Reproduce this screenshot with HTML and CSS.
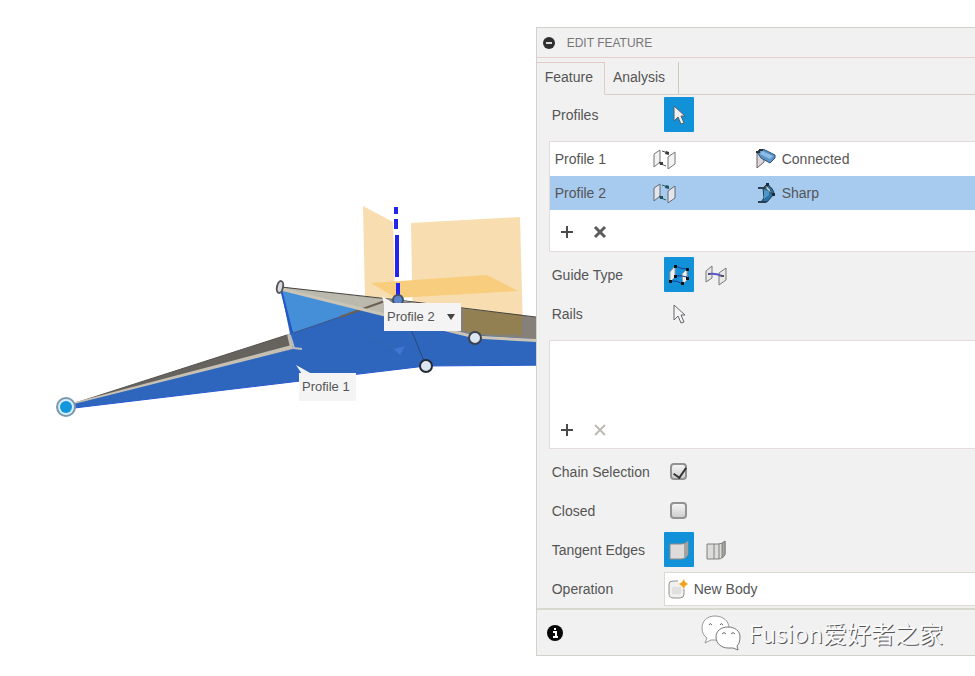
FILE: index.html
```
<!DOCTYPE html>
<html lang="en">

<head>
    <meta charset="UTF-8">
    <title>Edit Feature</title>
    <link rel="stylesheet" href="styles.css">
</head>

<body>
    <div class="app">
        <!-- model view -->
        <main class="workspace">
            <svg class="model" width="560" height="676" viewBox="0 0 560 676" aria-hidden="true">
                <!-- origin planes -->
                <polygon points="363,206 393,222 395,300 365,298" fill="#f8ddb0" />
                <polygon points="411,223 520,217 523,333 413,330" fill="#f8ddb0" />
                <polygon points="371,283 487,275 518,291 396,298" fill="#f8cd7d" />
                <path d="M396 207v7M396 219v10M397 235v42M398 283v13" stroke="#2424f0" stroke-width="4" />
                <!-- left wing -->
                <polygon points="66,406 290,334 294,349" fill="#66625d" />
                <path d="M66 406L290 334" stroke="#55524e" stroke-width="1" />
                <path d="M72 405L292 347L289 334" fill="none" stroke="#c4c0b3" stroke-width="4" />
                <!-- right wing -->
                <polygon points="281,287 383,299 560,320 560,342 475,336 360,311" fill="#85817a" />
                <polygon points="281,287 390,300 385,318" fill="#bbb8ae" />
                <polygon points="463,309 522,315 522,335 475,334 463,330" fill="#928052" />
                <path d="M281 287L398 300L560 320" fill="none" stroke="#46443f" stroke-width="1" />
                <!-- body -->
                <polygon points="281,290 385,316 475,335 560,341 560,365 426,366 66,409 70,405 293,349 290,334" fill="#2e66bd" />
                <polygon points="281,290 362,309 293,333" fill="#458fd8" />
                <path d="M293 333L340 317" stroke="#3f5787" stroke-width="1" />
                <path d="M340 317L385 301" stroke="#6d5f50" stroke-width="2" />
                <path d="M281 289L385 315L475 337L560 342" fill="none" stroke="#cbc5b8" stroke-width="3" />
                <path d="M281 289L292 333" fill="none" stroke="#2456c6" stroke-width="2" />
                <path d="M290 335L294 348L302 349" fill="none" stroke="#b9bbbf" stroke-width="2" />
                <path d="M66 409L426 366L560 365" fill="none" stroke="#2759d0" stroke-width="1" />
                <path d="M408 322L426 366" stroke="#294875" stroke-width="1" />
                <path d="M360 331L398 350" stroke="#2d6fae" stroke-width="1" />
                <path d="M394 349l11-3l-5 9z" fill="#4274d5" />
                <!-- control points -->
                <ellipse cx="280" cy="287" rx="3" ry="6" transform="rotate(12 280 287)" fill="#d9dce2" stroke="#57575a" stroke-width="2" />
                <circle cx="398" cy="300" r="5" fill="#5b85c8" stroke="#3d5271" stroke-width="2" />
                <circle cx="475" cy="338" r="6" fill="#dce5f0" stroke="#3b424d" stroke-width="2" />
                <circle cx="426" cy="366" r="6" fill="#dce5f0" stroke="#262b35" stroke-width="2" />
                <circle cx="66" cy="407" r="9" fill="#d3efff" stroke="#7d98ad" stroke-width="2" />
                <circle cx="66" cy="407" r="6" fill="#1496dc" />
                <path d="M296 365l16 9h-10z" fill="#f4f4f4" />
                <path d="M382 296l14 9h-12z" fill="#f4f4f4" />
            </svg>
            <button class="tag tag-profile-2" type="button">Profile 2
                <svg width="8" height="6" viewBox="0 0 8 6" aria-hidden="true"><path d="M0 0h8L4 6z" fill="#444" /></svg>
            </button>
            <span class="tag tag-profile-1">Profile 1</span>
        </main>

        <!-- dialog -->
        <aside class="panel">
            <header class="panel-header">
                <button class="plain-button" type="button" aria-label="Collapse">
                    <svg width="12" height="12" viewBox="0 0 12 12"><circle cx="6" cy="6" r="6" fill="#303030" /><path d="M3 6h6" stroke="#ddd" stroke-width="2" /></svg>
                </button>
                <h1 class="panel-title">EDIT FEATURE</h1>
            </header>

            <div class="tabs" role="tablist">
                <button class="tab tab-active" type="button" role="tab" aria-selected="true">Feature</button>
                <button class="tab" type="button" role="tab" aria-selected="false">Analysis</button>
            </div>

            <form class="panel-body">
                <div class="field">
                    <span class="field-label" id="profiles-label">Profiles</span>
                    <button class="tool tool-active" type="button" aria-labelledby="profiles-label">
                        <svg width="14" height="20" viewBox="0 0 14 20"><path d="M2 1v15l4-4 3 7 3-1-3-7h4z" fill="#eee" stroke="#50606b" stroke-width="1" /></svg>
                    </button>
                </div>

                <div class="list">
                    <table class="profiles">
                        <tr>
                            <td class="profile-name">Profile 1</td>
                            <td class="profile-shape">
                                <svg width="24" height="20" viewBox="0 0 24 20"><g fill="#f3f3f3" stroke="#77777a" stroke-width="1"><path d="M1 5l6-4v12l-6 5zM15 8l7-5v12l-7 5z" /></g><path d="M9 2l6 2M8 15l5 2" stroke="#555" stroke-width="1" /><path d="M13 2l3 1v3l-4-1zM6 13h4v3H7z" fill="#3a3a3a" /></svg>
                            </td>
                            <td class="profile-type">
                                <span class="type">
                                    <svg width="20" height="20" viewBox="0 0 20 20"><path d="M1 4v15l7-6V6z" fill="#ddd5d8" stroke="#6a5f66" stroke-width="1" /><path d="M1 3l3-3h3l12 6v3l-5 5-9-5z" fill="#5b93cb" stroke="#2e526f" stroke-width="1" /><path d="M6 2l11 5-3 3-10-5z" fill="#8dbce4" /><path d="M0 2h4v2H0zM3 0h4v2H3z" fill="#333" /></svg>
                                    Connected
                                </span>
                            </td>
                        </tr>
                        <tr class="selected">
                            <td class="profile-name">Profile 2</td>
                            <td class="profile-shape">
                                <svg width="24" height="20" viewBox="0 0 24 20"><g fill="#e4e6ec" stroke="#626873" stroke-width="1"><path d="M1 5l6-4v12l-6 5zM15 8l7-5v12l-7 5z" /></g><path d="M9 2l6 2M8 15l5 2" stroke="#235f67" stroke-width="1" /><path d="M13 2l3 1v3l-4-1zM6 13h4v3H7z" fill="#205158" /></svg>
                            </td>
                            <td class="profile-type">
                                <span class="type">
                                    <svg width="20" height="20" viewBox="0 0 20 20"><path d="M7 5l4-4q7 5 7 10l-7 8H5l3-4z" fill="#2a6fa6" stroke="#203d50" stroke-width="1" /><path d="M10 2q5 4 6 9l-6-5z" fill="#c3d3e2" stroke="#354a58" stroke-width="1" /><path d="M8 7v9l5-4V8z" fill="#4f97cb" /><path d="M2 5h7M2 19h8" stroke="#2b3f4d" stroke-width="2" /><path d="M10 0h3v3h-3zM16 10h3v3h-3z" fill="#1d2c36" /></svg>
                                    Sharp
                                </span>
                            </td>
                        </tr>
                    </table>
                    <div class="list-actions list-actions-profiles">
                        <button class="plain-button" type="button" aria-label="Add profile">
                            <svg width="14" height="14" viewBox="0 0 14 14"><path d="M7 1v12M1 7h12" stroke="#4a4a4a" stroke-width="2" /></svg>
                        </button>
                        <button class="plain-button" type="button" aria-label="Remove profile">
                            <svg width="14" height="14" viewBox="0 0 14 14"><path d="M2 2l10 10M12 2L2 12" stroke="#5c5c5c" stroke-width="3" /></svg>
                        </button>
                    </div>
                </div>

                <div class="field">
                    <span class="field-label">Guide Type</span>
                    <button class="tool tool-active" type="button" aria-label="Rails guide">
                        <svg width="22" height="22" viewBox="0 0 22 22"><path d="M2 8l5-6v11l-5 5zM14 10l5-5v11l-4 4z" fill="#f0f0f0" stroke="#9a9a9c" stroke-width="1" /><path d="M7 2q6 3 12 3M2 17q7-1 13 3M7 12q6-1 12 1" fill="none" stroke="#173a9c" stroke-width="1" /><path d="M6 1h3v3H6zM18 4h3v3h-3zM1 16h3v3H1zM13 18h3v3h-3zM6 11h3v3H6zM18 13h3v3h-3z" fill="#111" /></svg>
                    </button>
                    <button class="tool" type="button" aria-label="Centerline guide">
                        <svg width="22" height="22" viewBox="0 0 22 22"><path d="M1 7l6-5v12l-6 4zM14 9l7-5v12l-7 5z" fill="#e8e8e6" stroke="#77777a" stroke-width="1" /><path d="M4 10q6-1 13 2" fill="none" stroke="#5a5ac4" stroke-width="2" /><path d="M3 9h2v2H3zM16 11h3v2h-3z" fill="#555" /></svg>
                    </button>
                </div>
                <div class="field">
                    <span class="field-label" id="rails-label">Rails</span>
                    <button class="tool" type="button" aria-labelledby="rails-label">
                        <svg width="14" height="20" viewBox="0 0 14 20"><path d="M2 1v15l4-4 3 7 3-1-3-7h4z" fill="#f5f5f5" stroke="#66666a" stroke-width="1" /></svg>
                    </button>
                </div>

                <div class="list">
                    <div class="rails-empty"></div>
                    <div class="list-actions">
                        <button class="plain-button" type="button" aria-label="Add rail">
                            <svg width="14" height="14" viewBox="0 0 14 14"><path d="M7 1v12M1 7h12" stroke="#4a4a4a" stroke-width="2" /></svg>
                        </button>
                        <button class="plain-button" type="button" aria-label="Remove rail" disabled>
                            <svg width="14" height="14" viewBox="0 0 14 14"><path d="M2 2l10 10M12 2L2 12" stroke="#bdbbb4" stroke-width="2" /></svg>
                        </button>
                    </div>
                </div>

                <div class="field">
                    <label class="field-label" for="chain">Chain Selection</label>
                    <input class="check" type="checkbox" id="chain" checked>
                </div>
                <div class="field">
                    <label class="field-label" for="closed">Closed</label>
                    <input class="check" type="checkbox" id="closed">
                </div>
                <div class="field">
                    <span class="field-label">Tangent Edges</span>
                    <button class="tool tool-active" type="button" aria-label="Merge">
                        <svg width="22" height="22" viewBox="0 0 22 22"><path d="M2 5h11q5 0 7-3v13q-2 5-7 5H2z" fill="#dddcda" stroke="#8f8a84" stroke-width="1" /><path d="M16 5q3-1 4-3v13q-1 3-4 4z" fill="#a5a29f" /></svg>
                    </button>
                    <button class="tool" type="button" aria-label="Keep">
                        <svg width="22" height="22" viewBox="0 0 22 22"><path d="M2 5h11q5 0 7-3v13q-2 5-7 5H2z" fill="#dcdcda" stroke="#80807d" stroke-width="1" /><path d="M9 5v15M14 5v15" stroke="#80807d" stroke-width="1" /><path d="M17 4q2-1 3-2v13q-1 3-3 4z" fill="#a5a5a2" stroke="#80807d" stroke-width="1" /></svg>
                    </button>
                </div>
                <div class="field">
                    <label class="field-label" for="operation">Operation</label>
                    <div class="combo">
                        <svg width="20" height="20" viewBox="0 0 20 20" aria-hidden="true"><path d="M10 2H5Q1 2 1 5v10q0 4 5 4h6q4 0 4-4v-5" fill="#f0f0ee" stroke="#92928f" stroke-width="1" /><path d="M4 8h9v7H4z" fill="#e0e0de" /><path d="M16 0l1 3 3 2-3 2-1 3-2-3-3-2 3-2z" fill="#f5a21b" /></svg>
                        <select class="combo-select" id="operation">
                            <option>New Body</option>
                        </select>
                    </div>
                </div>
            </form>

            <footer class="panel-footer">
                <button class="plain-button" type="button" aria-label="Info">
                    <svg width="16" height="16" viewBox="0 0 16 16"><circle cx="8" cy="8" r="8" fill="#050505" /><path d="M8 3v2M6 7h3v5M6 12h5" fill="none" stroke="#fff" stroke-width="2" /></svg>
                </button>
                <div class="account">
                    <svg width="40" height="36" viewBox="0 0 40 36" aria-hidden="true">
                        <path d="M14 1C6 1 1 6 1 13c0 5 2 8 5 10l-2 5 6-3h6c7 0 12-5 12-12S22 1 14 1z" fill="#fff" stroke="#999" stroke-width="1" />
                        <path d="M27 12c-7 0-12 4-12 10s5 11 12 11h5l5 2-1-4c2-2 3-5 3-9 0-6-5-10-12-10z" fill="#fff" stroke="#777" stroke-width="1" />
                        <path d="M8 10q1-3 3 0M19 10q1-3 3 0M21 19q2-3 4 0M30 19q2-3 4 0" fill="none" stroke="#666" stroke-width="1" />
                    </svg>
                    <span>Fusion爱好者之家</span>
                </div>
            </footer>
        </aside>
    </div>
</body>

</html>
```
FILE: styles.css
```
* {
    box-sizing: border-box;
}

body {
    margin: 0;
    background: #ffffff;
    color: #555555;
    font-family: "Liberation Sans", Arial, "Noto Sans CJK SC", sans-serif;
    font-size: 14px;
    line-height: 20px;
}

button,
select {
    margin: 0;
    padding: 0;
    border: 0;
    background: none;
    color: inherit;
    font: inherit;
}

svg {
    display: block;
    flex: none;
}

.app {
    display: flex;
    align-items: flex-start;
    min-height: 100vh;
}

/* model view */
.workspace {
    position: relative;
    flex: 11 1 0;
    min-width: 0;
    overflow: hidden;
}

.tag {
    position: absolute;
    display: flex;
    align-items: center;
    gap: 12px;
    height: 28px;
    padding: 0 6px 0 3px;
    background: #f4f4f4;
    font-size: 13px;
    white-space: nowrap;
}

.tag-profile-2 {
    left: 384px;
    top: 303px;
}

.tag-profile-1 {
    left: 299px;
    top: 373px;
}

/* dialog */
.panel {
    flex: 9 1 0;
    min-width: 0;
    margin-top: 27px;
    background: #f1f1f1;
    border: 1px solid #d3d1cc;
    border-right: 0;
}

.panel-header {
    display: flex;
    align-items: center;
    gap: 12px;
    height: 30px;
    padding-left: 6px;
    border-bottom: 1px solid #e6cfcd;
}

.panel-title {
    margin: 0;
    font-size: 12px;
    font-weight: normal;
    color: #777777;
}

.plain-button {
    display: flex;
}

.tabs {
    display: flex;
    height: 37px;
    padding-top: 4px;
}

.tabs::after {
    content: "";
    flex: 1;
    border-bottom: 1px solid #d9cfc5;
}

.tab {
    padding: 0 13px 2px 8px;
    border-right: 1px solid #cfcbbd;
    border-bottom: 1px solid #d9cfc5;
}

.tab-active {
    padding: 0 11px 3px 8px;
    border-top: 1px solid #e2cac6;
    border-right-color: #e2cac6;
    border-bottom-color: #f1f1f1;
}

.panel-body {
    padding-left: 12px;
}

.field {
    display: flex;
    align-items: center;
    gap: 7px;
    height: 39px;
    padding-left: 3px;
}

.field-label {
    flex: none;
    width: 105px;
}

.tool {
    display: flex;
    align-items: center;
    justify-content: center;
    width: 30px;
    height: 35px;
    border-radius: 1px;
}

.tool-active {
    background: #1191d8;
}

.list {
    margin: 7px 0 3px;
    background: #ffffff;
    border: 1px solid #e4dcda;
    border-right: 0;
}

.profiles {
    width: 100%;
    border-collapse: collapse;
    table-layout: fixed;
}

.profiles td {
    height: 34px;
    padding: 0 0 0 5px;
}

.profiles .profile-name {
    width: 98px;
}

.profiles .profile-shape {
    width: 103px;
}

.selected {
    background: #a7caef;
}

.type {
    display: flex;
    align-items: center;
    gap: 6px;
}

.list-actions {
    display: flex;
    align-items: center;
    gap: 19px;
    height: 37px;
    padding-left: 10px;
}

.list-actions-profiles {
    height: 41px;
    padding-top: 3px;
}

.rails-empty {
    height: 70px;
}

.check {
    appearance: none;
    position: relative;
    width: 17px;
    height: 17px;
    margin: 0 0 0 6px;
    border: 2px solid #929290;
    border-radius: 4px;
    background: linear-gradient(#f4f4f4, #cfcfcf);
}

.check:checked::after {
    content: "";
    position: absolute;
    left: 4px;
    top: 0;
    width: 6px;
    height: 11px;
    border: solid #333333;
    border-width: 0 2px 2px 0;
    transform: rotate(35deg);
}

.combo {
    display: flex;
    align-items: center;
    gap: 6px;
    flex: 1;
    height: 34px;
    padding-left: 3px;
    background: #ffffff;
    border: 1px solid #ddd9d1;
    border-right: 0;
}

.combo-select {
    appearance: none;
    flex: 1;
    height: 32px;
}

.panel-footer {
    display: flex;
    align-items: center;
    justify-content: space-between;
    height: 47px;
    padding: 0 32px 0 10px;
    border-top: 2px solid #d8d8cf;
}

.account {
    display: flex;
    align-items: center;
    gap: 8px;
    color: #fafafa;
    font-family: "Noto Sans CJK SC", sans-serif;
    font-size: 24px;
    line-height: 36px;
    text-shadow: 1px 1px 0 #555555;
}
```
